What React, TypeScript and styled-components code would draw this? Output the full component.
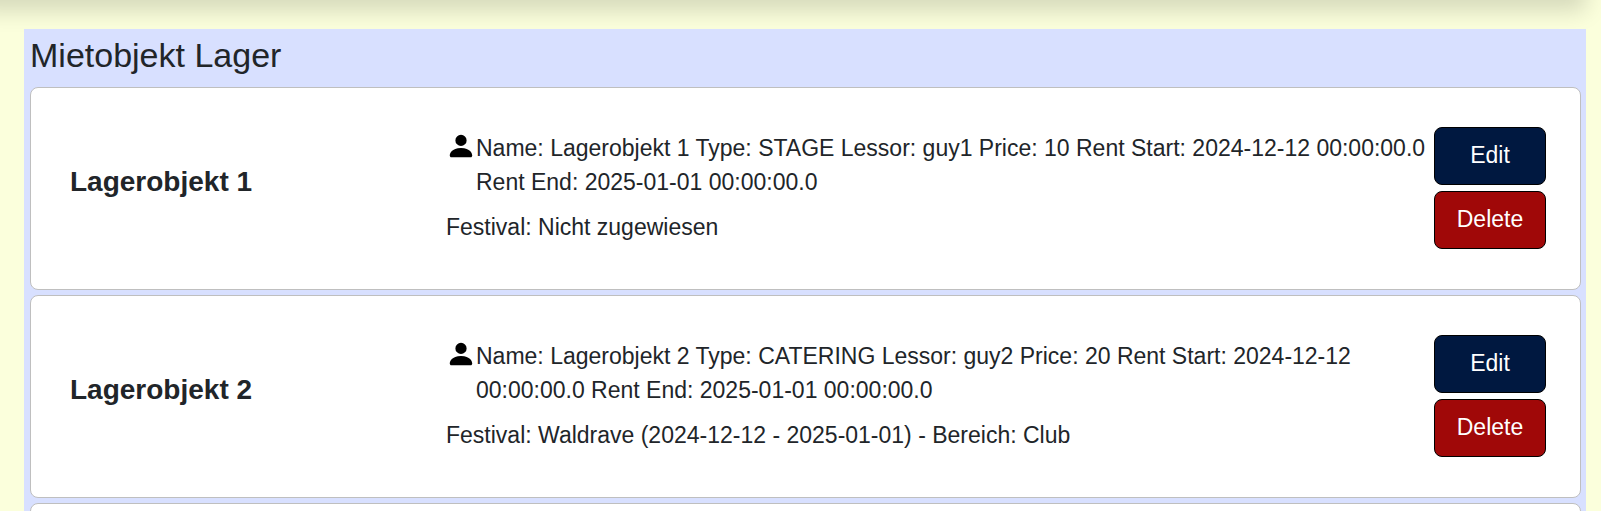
import React from "react";
import styled, { createGlobalStyle } from "styled-components";

const GlobalStyle = createGlobalStyle`
  *, *::before, *::after { box-sizing: border-box; }
  body {
    margin: 0;
    background: #fbffdc;
    color: #212529;
    font-family: "Liberation Sans", Arial, sans-serif;
    font-size: 23px;
    line-height: 34px;
  }
`;

const Page = styled.div`
  height: 100vh;
  overflow: hidden;
`;

const Navbar = styled.header`
  height: 64px;
  margin: -64px 15px 29px -24px;
  box-shadow: 0 11px 22px rgba(0, 0, 0, 0.15);
`;

const Panel = styled.main`
  position: relative;
  display: flex;
  flex-direction: column;
  margin: 0 15px 0 24px;
  padding: 6px 5px 6px 6px;
  background: #d8e0ff;
`;

const Title = styled.h1`
  margin: 0 0 12px;
  font-size: 34px;
  font-weight: 400;
  line-height: 40px;
`;

const List = styled.ul`
  display: flex;
  flex-direction: column;
  gap: 5px;
  margin: 0;
  padding: 0;
  list-style: none;
`;

const Card = styled.li`
  display: grid;
  grid-template-columns: 376px minmax(0, 1fr) 112px;
  align-items: center;
  padding: 39px 34px 40px 39px;
  background: #fff;
  border: 1px solid #bfbfbf;
  border-radius: 8px;
`;

const CardName = styled.h2`
  margin: 0 0 12px;
  font-size: 28px;
  font-weight: 700;
  line-height: 34px;
`;

const Details = styled.div`
  padding-bottom: 2px;
`;

const Facts = styled.div`
  display: flex;
  margin-bottom: 11px;
`;

const PersonIcon = styled.svg`
  flex: none;
  width: 30px;
  height: 30px;
`;

const Text = styled.p`
  margin: 0;
`;

const Actions = styled.div`
  display: flex;
  flex-direction: column;
  gap: 6px;
`;

const Button = styled.button<{ $danger?: boolean }>`
  height: 58px;
  padding: 0 8px 3px;
  color: #fff;
  background: ${(p) => (p.$danger ? "#a00808" : "#001840")};
  border: 1px solid #000;
  border-radius: 8px;
  font: inherit;
  cursor: pointer;
`;

interface Item {
  name: string;
  type: string;
  lessor: string;
  price: number;
  festival: string;
}

const items: Item[] = [
  { name: "Lagerobjekt 1", type: "STAGE", lessor: "guy1", price: 10, festival: "Nicht zugewiesen" },
  {
    name: "Lagerobjekt 2",
    type: "CATERING",
    lessor: "guy2",
    price: 20,
    festival: "Waldrave (2024-12-12 - 2025-01-01) - Bereich: Club",
  },
];

function ItemCard({ item }: { item: Item }) {
  return (
    <Card>
      <CardName>{item.name}</CardName>
      <Details>
        <Facts>
          <PersonIcon viewBox="0 0 16 16" aria-hidden="true">
            <path d="M3 14s-1 0-1-1 1-4 6-4 6 3 6 4-1 1-1 1zm5-6a3 3 0 1 0 0-6 3 3 0 0 0 0 6" />
          </PersonIcon>
          <Text>
            {`Name: ${item.name} Type: ${item.type} Lessor: ${item.lessor} Price: ${item.price} Rent Start: 2024-12-12 00:00:00.0 Rent End: 2025-01-01 00:00:00.0`}
          </Text>
        </Facts>
        <Text>Festival: {item.festival}</Text>
      </Details>
      <Actions>
        <Button type="button">Edit</Button>
        <Button type="button" $danger>
          Delete
        </Button>
      </Actions>
    </Card>
  );
}

export default function App() {
  return (
    <Page>
      <GlobalStyle />
      <Navbar />
      <Panel>
        <Title>Mietobjekt Lager</Title>
        <List>
          {items.map((item) => (
            <ItemCard key={item.name} item={item} />
          ))}
          <Card />
        </List>
      </Panel>
    </Page>
  );
}
